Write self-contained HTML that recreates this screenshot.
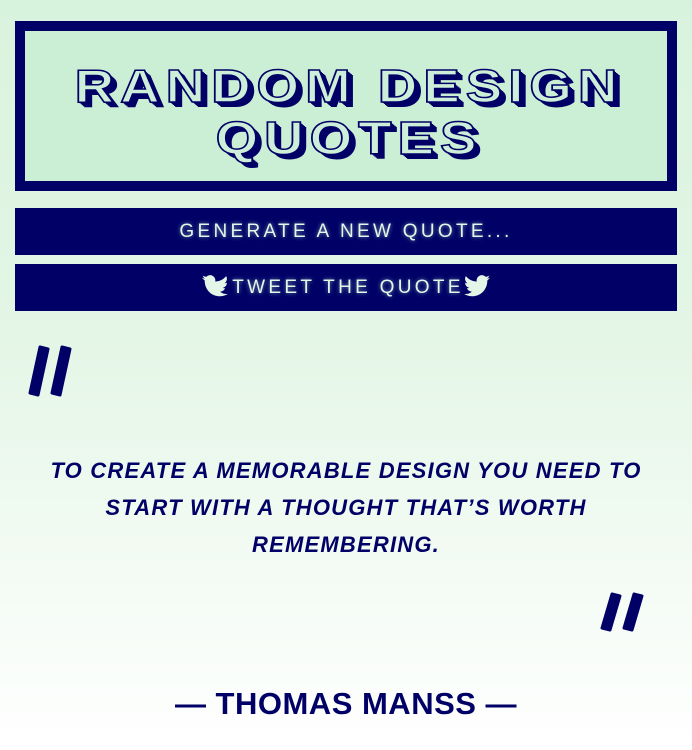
<!DOCTYPE html>
<html><head><meta charset="utf-8"><style>
html,body{margin:0;padding:0}
body{width:692px;height:750px;overflow:hidden;background:linear-gradient(#d8f3dd 0%,#e4f6e6 45%,#ffffff 100%);font-family:"Liberation Sans",sans-serif;position:relative}
.hdr{position:absolute;left:15px;top:21px;width:642px;height:150px;border:10px solid #000066;background:#cbefd4}
.t{position:absolute;left:3px;width:100%;text-align:center;font-weight:bold;font-size:46px;letter-spacing:5px;color:#cdeed8;-webkit-text-stroke:1.5px #000066;text-shadow:1px 1px 0 #000066,2px 2px 0 #000066,3px 3px 0 #000066,4px 4px 0 #000066,5px 5px 0 #000066;line-height:50px;transform:scaleX(1.19)}
.btn{position:absolute;left:15px;width:662px;height:47px;background:#000066;color:#e4f6e8;text-align:center;font-size:19px;letter-spacing:3.3px;line-height:47px;text-shadow:0 0 4px rgba(200,255,220,.6)}
.qt{position:absolute;left:30px;width:632px;top:452px;text-align:center;color:#000066;font-weight:bold;font-style:italic;font-size:22px;line-height:37px;letter-spacing:1.2px}
.au{position:absolute;left:0;width:692px;top:686px;text-align:center;color:#000066;font-weight:bold;font-size:31px;letter-spacing:0.5px}
</style></head><body>
<div class="hdr">
<div class="t" style="top:30px">RANDOM DESIGN</div>
<div class="t" style="top:82px">QUOTES</div>
</div>
<div class="btn" style="top:208px">GENERATE A NEW QUOTE...</div>
<div class="btn" style="top:264px"><svg width="26" height="22" viewBox="0 0 24 20" style="vertical-align:-4px;margin-right:4px"><path fill="#e4f6e8" d="M24 2.4a10 10 0 0 1-2.8.8A5 5 0 0 0 23.3.4a10 10 0 0 1-3.1 1.2A4.9 4.9 0 0 0 11.8 6 14 14 0 0 1 1.7.9a4.9 4.9 0 0 0 1.5 6.6 4.9 4.9 0 0 1-2.2-.6 4.9 4.9 0 0 0 3.9 4.9 5 5 0 0 1-2.2.1 4.9 4.9 0 0 0 4.6 3.4A9.9 9.9 0 0 1 0 17.3 14 14 0 0 0 7.5 19.5c9 0 14-7.5 14-14v-.6A10 10 0 0 0 24 2.4z" transform="translate(24,0) scale(-1,1)"/></svg>TWEET THE QUOTE<svg width="26" height="22" viewBox="0 0 24 20" style="vertical-align:-4px"><path fill="#e4f6e8" d="M24 2.4a10 10 0 0 1-2.8.8A5 5 0 0 0 23.3.4a10 10 0 0 1-3.1 1.2A4.9 4.9 0 0 0 11.8 6 14 14 0 0 1 1.7.9a4.9 4.9 0 0 0 1.5 6.6 4.9 4.9 0 0 1-2.2-.6 4.9 4.9 0 0 0 3.9 4.9 5 5 0 0 1-2.2.1 4.9 4.9 0 0 0 4.6 3.4A9.9 9.9 0 0 1 0 17.3 14 14 0 0 0 7.5 19.5c9 0 14-7.5 14-14v-.6A10 10 0 0 0 24 2.4z"/></svg></div>
<svg style="position:absolute;left:26px;top:343px" width="48" height="58" viewBox="0 0 48 58"><path d="M14 4 L22 6 L12 52 L4 50 Z M36 4 L44 6 L34 52 L26 50 Z" fill="#000066" stroke="#000066" stroke-width="3" stroke-linejoin="round"/></svg>
<svg style="position:absolute;left:598px;top:590px" width="48" height="44" viewBox="0 0 48 44"><path d="M14 4 L22 6 L12 40 L4 38 Z M36 4 L44 6 L34 40 L26 38 Z" fill="#000066" stroke="#000066" stroke-width="3" stroke-linejoin="round"/></svg>
<div class="qt">TO CREATE A MEMORABLE DESIGN YOU NEED TO START WITH A THOUGHT THAT’S WORTH REMEMBERING.</div>
<div class="au">— THOMAS MANSS —</div>
</body></html>
